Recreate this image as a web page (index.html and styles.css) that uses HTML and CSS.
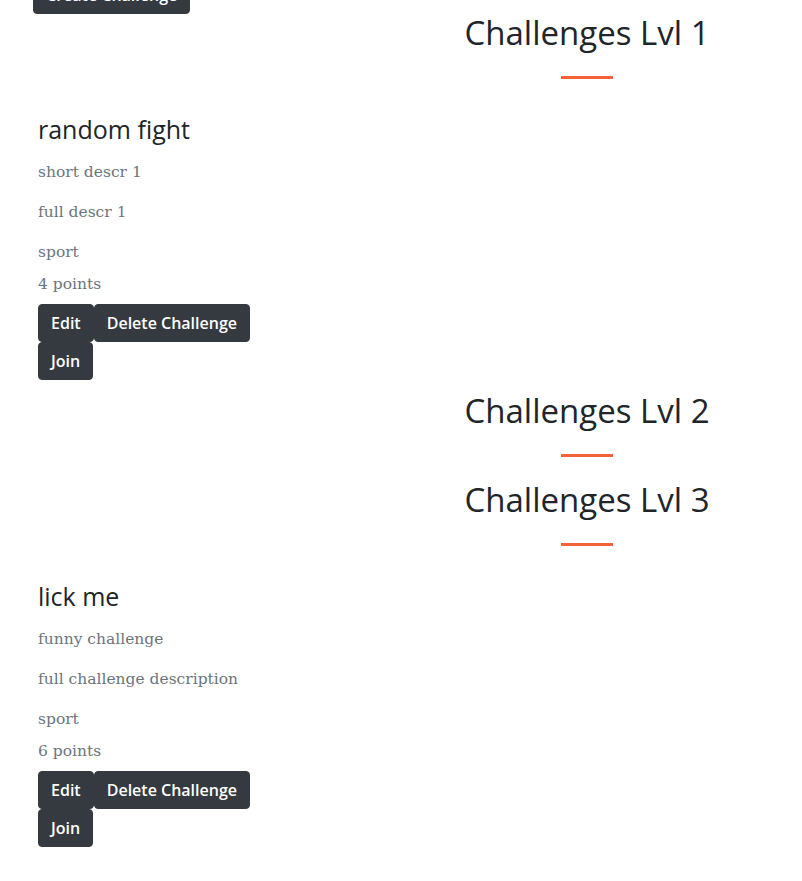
FILE: index.html
```html
<!DOCTYPE html>
<html>
<head>
<meta charset="utf-8">
<link rel="stylesheet" href="styles.css">
</head>
<body>
<div class="page">
  <div class="top">
    <button class="btn create">Create Challenge</button>
  </div>

  <section class="level">
    <div class="level-head">
      <h2>Challenges Lvl 1</h2>
      <hr class="divider">
    </div>
    <div class="challenge">
      <h3>random fight</h3>
      <p class="muted">short descr 1</p>
      <p class="muted">full descr 1</p>
      <p class="muted tight">sport</p>
      <p class="muted tight">4 points</p>
      <div class="actions">
        <button class="btn">Edit</button><button class="btn">Delete Challenge</button>
      </div>
      <div class="actions">
        <button class="btn">Join</button>
      </div>
    </div>
  </section>

  <section class="level">
    <div class="level-head">
      <h2>Challenges Lvl 2</h2>
      <hr class="divider">
    </div>
  </section>

  <section class="level">
    <div class="level-head">
      <h2>Challenges Lvl 3</h2>
      <hr class="divider">
    </div>
    <div class="challenge">
      <h3>lick me</h3>
      <p class="muted">funny challenge</p>
      <p class="muted">full challenge description</p>
      <p class="muted tight">sport</p>
      <p class="muted tight">6 points</p>
      <div class="actions">
        <button class="btn">Edit</button><button class="btn">Delete Challenge</button>
      </div>
      <div class="actions">
        <button class="btn">Join</button>
      </div>
    </div>
  </section>
</div>
</body>
</html>
```

FILE: styles.css
```css
html, body {
  margin: 0;
  padding: 0;
  background: #fff;
}
body {
  font-family: "DejaVu Serif", "Liberation Serif", serif;
  color: #212529;
}
.page {
  width: 802px;
}
.top {
  margin-top: -24px;
  padding-left: 33px;
  height: 38px;
}
.btn {
  display: inline-block;
  font-family: "Open Sans", "DejaVu Sans", sans-serif;
  font-weight: 600;
  font-size: 16px;
  line-height: 24px;
  padding: 6px 12px;
  color: #fff;
  background: #343a40;
  border: 1px solid #343a40;
  border-radius: 4px;
  margin: 0;
  box-sizing: border-box;
  height: 38px;
  cursor: pointer;
}
.level-head {
  margin-left: 372px;
  width: 430px;
  text-align: center;
}
h2 {
  font-family: "Open Sans", "DejaVu Sans", sans-serif;
  font-weight: 400;
  font-size: 33px;
  line-height: 38px;
  margin: 0;
}
.divider {
  width: 52px;
  height: 0;
  border: 0;
  border-top: 3px solid #f4623a;
  margin: 24px auto;
}
.challenge {
  padding-left: 38px;
  padding-top: 9px;
  padding-bottom: 12px;
}
h3 {
  font-family: "Open Sans", "DejaVu Sans", sans-serif;
  font-weight: 400;
  font-size: 25px;
  line-height: 34px;
  margin: 0 0 14px;
}
.muted {
  color: #6c757d;
  font-size: 15.5px;
  line-height: 24px;
  margin: 0 0 16px;
}
.muted.tight {
  margin-bottom: 8px;
}
.actions {
  display: flex;
}
```
